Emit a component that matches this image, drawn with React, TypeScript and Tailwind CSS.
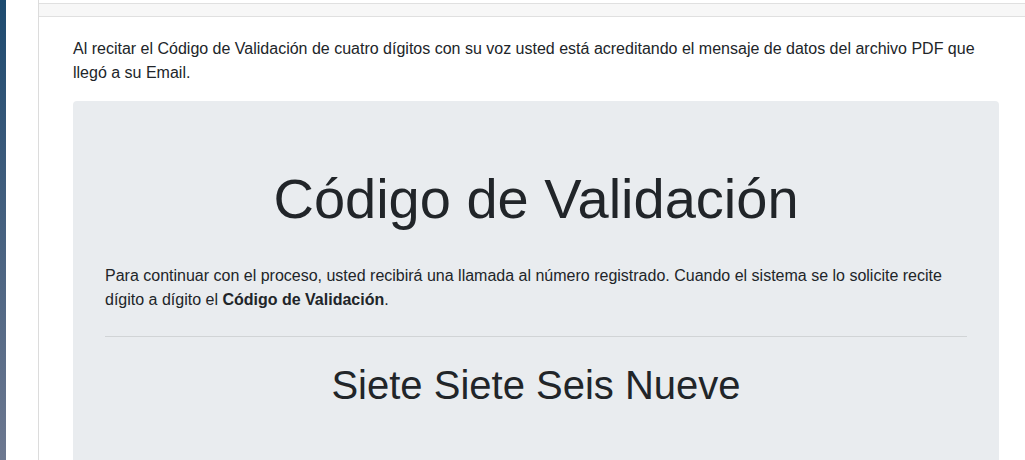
export default function App() {
  return (
    <div
      className="flex h-[460px] w-[1025px] overflow-hidden bg-white text-[#212529]"
      style={{ fontFamily: '"Liberation Sans", Arial, sans-serif' }}
    >
      <div className="w-[6px] shrink-0 bg-gradient-to-b from-[#1c4a6f] to-[#6d7890]" />
      <div className="w-[32px] shrink-0 bg-white" />
      <div className="flex min-w-0 flex-1 flex-col border-l border-[#dcdcdc]">
        <div className="mt-[3px] h-[14px] shrink-0 border-y border-[#e0e0e0] bg-[#f7f7f7]" />
        <div className="pl-[34px] pr-[26px] pt-[20px]">
          <p className="mb-4 text-[16px] leading-[24px]">
            Al recitar el Código de Validación de cuatro dígitos con su voz usted está acreditando el mensaje de datos del archivo PDF que llegó a su Email.
          </p>
          <div className="rounded-[4px] bg-[#e9ecef] px-8 pb-16 pt-16">
            <h1 className="mb-8 text-center text-[56px] font-normal leading-[67px]">
              Código de Validación
            </h1>
            <p className="text-[16px] leading-[24px]">
              Para continuar con el proceso, usted recibirá una llamada al número registrado. Cuando el sistema se lo solicite recite dígito a dígito el{' '}
              <b className="font-bold">Código de Validación</b>.
            </p>
            <hr className="my-6 border-t border-black/10" />
            <h1 className="text-center text-[40px] font-normal leading-[48px]">
              Siete Siete Seis Nueve
            </h1>
          </div>
        </div>
      </div>
    </div>
  );
}
